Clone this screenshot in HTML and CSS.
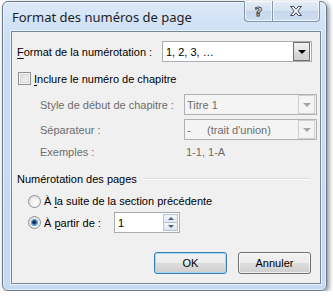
FILE: index.html
```html
<!DOCTYPE html>
<html lang="fr">
<head>
    <meta charset="UTF-8">
    <meta name="viewport" content="width=device-width, initial-scale=1.0">
    <title>Format des numéros de page</title>
    <link rel="stylesheet" href="styles.css">
</head>
<body>
    <div class="window">
        <div class="titlebar">
            <span class="title">Format des numéros de page</span>
            <div class="caption-btns">
                <span class="cap-btn help">?</span>
                <span class="cap-btn close">
                    <svg width="14" height="12" viewBox="0 0 14 12">
                        <path d="M1.5 1.5h3.2L7 4.3l2.3-2.8h3.2L8.8 6l3.7 4.5H9.3L7 7.7l-2.3 2.8H1.5L5.2 6z" fill="#fff" stroke="#3c4a5c" stroke-width="1" stroke-linejoin="round"/>
                    </svg>
                </span>
            </div>
        </div>

        <div class="client">
            <div class="format-row">
                <span class="lbl"><u>F</u>ormat de la numérotation :</span>
                <div class="combo">
                    <span class="combo-text">1, 2, 3, …</span>
                    <span class="combo-btn"><span class="arrow"></span></span>
                </div>
            </div>

            <div class="check-row">
                <span class="checkbox"></span>
                <span><u>I</u>nclure le numéro de chapitre</span>
            </div>

            <div class="chapter">
                <span>Style de début de chapitre :</span>
                <div class="combo disabled">
                    <span class="combo-text">Titre 1</span>
                    <span class="combo-btn"><span class="arrow"></span></span>
                </div>
                <span>Séparateur :</span>
                <div class="combo disabled">
                    <span class="combo-text"><span class="dash">-</span>(trait d'union)</span>
                    <span class="combo-btn"><span class="arrow"></span></span>
                </div>
                <span class="ex">Exemples :</span>
                <span class="ex ex-value">1-1, 1-A</span>
            </div>

            <div class="group-head">
                <span>Numérotation des pages</span>
                <span class="rule"></span>
            </div>

            <div class="radio-row">
                <span class="radio"></span>
                <span>À <u>l</u>a suite de la section précédente</span>
            </div>
            <div class="radio-row start-row">
                <span class="radio checked"></span>
                <span class="start-lbl">À <u>p</u>artir de :</span>
                <div class="spin">
                    <span class="spin-text">1</span>
                    <div class="spin-btns">
                        <span class="spin-up"></span>
                        <span class="spin-down"></span>
                    </div>
                </div>
            </div>

            <div class="buttons">
                <button class="btn default">OK</button>
                <button class="btn">Annuler</button>
            </div>
        </div>
    </div>
</body>
</html>
```

FILE: styles.css
```css
body {
    margin: 0;
    padding: 1px 0 0 2px;
    background: #fff;
    font-family: "Liberation Sans", Arial, sans-serif;
    font-size: 11px;
    color: #000;
}
u {
    text-decoration-thickness: 1px;
    text-underline-offset: 2px;
}
.window {
    width: 323px;
    height: 288px;
    border: 1px solid #6b7888;
    border-radius: 6px;
    background: linear-gradient(#dce9f9, #c9ddf4 40px, #c5daf3);
    box-shadow: 2px 2px 5px rgba(0, 0, 0, 0.45), inset 0 0 0 1px rgba(255, 255, 255, 0.55);
    display: flex;
    flex-direction: column;
}
.titlebar {
    height: 29px;
    display: flex;
    align-items: flex-start;
    padding-left: 9px;
}
.title {
    font-family: "Noto Sans", sans-serif;
    font-size: 13px;
    line-height: 16px;
    margin-top: 7px;
    color: #1e1e1e;
    white-space: nowrap;
}
.caption-btns {
    display: flex;
    margin-left: auto;
    margin-right: 6px;
    margin-top: -1px;
}
.cap-btn {
    height: 20px;
    display: flex;
    align-items: center;
    justify-content: center;
    border: 1px solid #8797ab;
    border-top: none;
    background: linear-gradient(#e6eef8, #d3e1f1 50%, #c6d7ec 51%, #cfdef0);
    box-shadow: inset 0 0 0 1px rgba(255, 255, 255, 0.6);
}
.help {
    width: 27px;
    border-right: none;
    border-radius: 0 0 0 4px;
    font-family: "DejaVu Sans", sans-serif;
    font-weight: bold;
    font-size: 13px;
    color: #fff;
    -webkit-text-stroke: 1px #3c4a5c;
}
.close {
    width: 46px;
    border-radius: 0 0 4px 0;
}
.client {
    flex: 1;
    margin: 0 5px 6px 8px;
    border: 1px solid #76879a;
    box-shadow: 0 0 0 1px rgba(255, 255, 255, 0.6);
    background: #f0f0f0;
    padding: 9px 8px 8px 5px;
}
.format-row {
    display: flex;
    align-items: center;
    height: 21px;
    white-space: nowrap;
}
.combo {
    margin-left: auto;
    width: 150px;
    height: 21px;
    box-sizing: border-box;
    border: 1px solid #abadb3;
    background: #fff;
    display: flex;
    align-items: center;
}
.combo-text {
    flex: 1;
    padding-left: 3px;
    white-space: nowrap;
}
.combo-btn {
    width: 15px;
    height: 17px;
    margin-right: 1px;
    border: 1px solid #707070;
    background: linear-gradient(#f2f2f2, #e3e3e3 50%, #d9d9d9 51%, #d0d0d0);
    display: flex;
    align-items: center;
    justify-content: center;
}
.arrow {
    width: 0;
    height: 0;
    border-left: 4px solid transparent;
    border-right: 4px solid transparent;
    border-top: 4px solid #000;
}
.combo.disabled {
    width: 133px;
    margin-left: 0;
    border-color: #adb2b5;
    background: #f4f4f4;
    color: #6d6d6d;
}
.combo.disabled .combo-text {
    padding-left: 2px;
}
.combo.disabled .combo-btn {
    border-color: #d0d0d0;
    background: #f4f4f4;
}
.combo.disabled .arrow {
    border-top-color: #a5a5a5;
}
.dash {
    display: inline-block;
    width: 20px;
}
.check-row {
    display: flex;
    align-items: center;
    gap: 3px;
    height: 13px;
    margin-top: 10px;
    padding-left: 1px;
    white-space: nowrap;
}
.checkbox {
    width: 11px;
    height: 11px;
    border: 1px solid #8e8f8f;
    background: linear-gradient(135deg, #d7d7d7, #f7f7f7);
    box-shadow: inset 0 0 0 1px #f4f4f4, inset 0 0 0 2px #d8d8d8;
}
.chapter {
    display: grid;
    grid-template-columns: 144px 133px;
    grid-auto-rows: 21px;
    row-gap: 4px;
    align-items: center;
    margin-top: 9px;
    padding-left: 23px;
    color: #6d6d6d;
    white-space: nowrap;
}
.chapter .ex {
    align-self: start;
    margin-top: 1px;
    height: 14px;
    line-height: 14px;
}
.ex-value {
    padding-left: 2px;
}
.group-head {
    display: flex;
    align-items: center;
    height: 14px;
    margin-top: 7px;
    white-space: nowrap;
}
.rule {
    flex: 1;
    margin-left: 6px;
    margin-right: 3px;
    height: 1px;
    background: #d5dfe5;
    border-bottom: 1px solid #fff;
}
.radio-row {
    display: flex;
    align-items: center;
    gap: 3px;
    height: 14px;
    margin-top: 8px;
    padding-left: 11px;
    white-space: nowrap;
}
.radio {
    width: 11px;
    height: 11px;
    border: 1px solid #8e8f8f;
    border-radius: 50%;
    background: radial-gradient(circle at 60% 65%, #fafafa 20%, #d9d9d9 90%);
    display: flex;
    align-items: center;
    justify-content: center;
}
.radio.checked::after {
    content: "";
    width: 5px;
    height: 5px;
    border-radius: 50%;
    background: radial-gradient(circle at 40% 40%, #0e2d4e 30%, #2a7ccd 70%, #7fd0ff);
    box-shadow: 0 0 0 1px #5aa0d8;
}
.start-row {
    height: 21px;
    margin-top: 4px;
}
.start-lbl {
    width: 67px;
}
.spin {
    width: 66px;
    height: 21px;
    box-sizing: border-box;
    border: 1px solid #abadb3;
    border-top-color: #a3a7ae;
    background: #fff;
    display: flex;
    align-items: center;
}
.spin-text {
    flex: 1;
    padding-left: 3px;
}
.spin-btns {
    width: 15px;
    height: 17px;
    margin-right: 1px;
    display: flex;
    flex-direction: column;
}
.spin-up, .spin-down {
    flex: 1;
    border: 1px solid #b6c3d1;
    background: linear-gradient(#f4f7fa, #dde5ee);
    display: flex;
    align-items: center;
    justify-content: center;
}
.spin-down {
    border-top: none;
}
.spin-up::after, .spin-down::after {
    content: "";
    width: 0;
    height: 0;
    border-left: 3px solid transparent;
    border-right: 3px solid transparent;
}
.spin-up::after {
    border-bottom: 3px solid #4d6185;
}
.spin-down::after {
    border-top: 3px solid #4d6185;
}
.buttons {
    display: flex;
    justify-content: flex-end;
    gap: 11px;
    margin-top: 19px;
    padding-right: 1px;
}
.btn {
    width: 73px;
    height: 22px;
    padding: 0;
    font: inherit;
    color: #000;
    border: 1px solid #707070;
    border-radius: 3px;
    background: linear-gradient(#f2f2f2, #ebebeb 50%, #dddddd 51%, #cfcfcf);
    box-shadow: inset 0 0 0 1px rgba(255, 255, 255, 0.7);
}
.btn.default {
    border-color: #3c7fb1;
    box-shadow: inset 0 0 0 1px #9fdaf8;
}
```
